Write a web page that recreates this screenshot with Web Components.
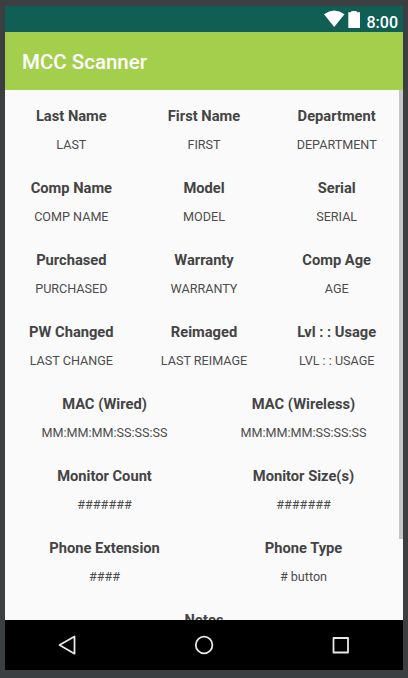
<!DOCTYPE html>
<html lang="en"><head><meta charset="utf-8"><title>MCC Scanner</title>
<style>html,body{margin:0;height:100%;overflow:hidden}</style></head>
<body><mcc-phone></mcc-phone>
<script>
class DataCell extends HTMLElement{
  connectedCallback(){
    this.attachShadow({mode:'open'}).innerHTML=`<style>
:host{display:block;flex:1 1 0;min-width:0;height:72px;box-sizing:border-box;padding-top:14px;text-align:center;white-space:nowrap;color:#444}
b{display:block;font-weight:700;font-size:14.7px;line-height:24px}
span{display:block;font-size:12.6px;line-height:16px;margin-top:9px;color:#4c4c4c}
</style><b>${this.getAttribute('label')}</b><span><slot></slot></span>`;
  }
}
customElements.define('data-cell',DataCell);
class DataRow extends HTMLElement{
  connectedCallback(){
    this.attachShadow({mode:'open'}).innerHTML=`<style>:host{display:flex}</style><slot></slot>`;
  }
}
customElements.define('data-row',DataRow);
class StatusBar extends HTMLElement{
  connectedCallback(){
    this.attachShadow({mode:'open'}).innerHTML=`<style>
:host{display:flex;height:26px;background:#115e54;color:#fff;justify-content:flex-end;box-sizing:border-box;padding-right:5px;font-size:16px;font-weight:500;line-height:33px}
svg{width:46px;height:26px;flex:none}
span{width:34px;text-align:right}
</style><svg viewBox="0 0 46 26" fill="#fff"><path d="M6 8.200Q16.200 1 26.500 8.200L16.200 21Z"/><path d="M30.300 6.200h3V5h5.400v1.200H42V22H30.300Z"/></svg><span>8:00</span>`;
  }
}
customElements.define('status-bar',StatusBar);
class AppBar extends HTMLElement{
  connectedCallback(){
    this.attachShadow({mode:'open'}).innerHTML=`<style>
:host{display:flex;align-items:center;box-sizing:border-box;height:58px;background:#a4cf4c;color:#fff;padding:2px 0 0 17px;font-size:20.5px;font-weight:500}
</style><slot></slot>`;
  }
}
customElements.define('app-bar',AppBar);
class NavBar extends HTMLElement{
  connectedCallback(){
    this.attachShadow({mode:'open'}).innerHTML=`<style>
:host{display:block;height:50px;background:#000}svg{display:block}
</style><svg width="398" height="50" fill="none" stroke="#e8e8e8" stroke-width="1.8" stroke-linejoin="round"><path d="M54.500 25L69.500 16.500V33.700Z"/><circle cx="199.100" cy="25" r="8.300"/><path d="M328.500 18h14.500v14.500h-14.500Z"/></svg>`;
  }
}
customElements.define('nav-bar',NavBar);
class MccPhone extends HTMLElement{
  connectedCallback(){
    const rows=[
[['Last Name','LAST'],['First Name','FIRST'],['Department','DEPARTMENT']],
[['Comp Name','COMP NAME'],['Model','MODEL'],['Serial','SERIAL']],
[['Purchased','PURCHASED'],['Warranty','WARRANTY'],['Comp Age','AGE']],
[['PW Changed','LAST CHANGE'],['Reimaged','LAST REIMAGE'],['Lvl : : Usage','LVL : : USAGE']],
[['MAC (Wired)','MM:MM:MM:SS:SS:SS'],['MAC (Wireless)','MM:MM:MM:SS:SS:SS']],
[['Monitor Count','#######'],['Monitor Size(s)','#######']],
[['Phone Extension','####'],['Phone Type','# button']],
[['Notes','']]];
    this.attachShadow({mode:'open'}).innerHTML=`<style>
:host{display:flex;flex-direction:column;width:408px;height:678px;box-sizing:border-box;padding:6px 5px 8px;background:#3c3f41;font-family:Roboto,sans-serif}
main{flex:1;min-height:0;overflow:hidden;background:#fafafa;display:flex}
section{flex:1;width:398px}
i{width:4px;height:449px;background:#c6c6c6;margin-left:-4px}
</style><status-bar></status-bar><app-bar>MCC Scanner</app-bar><main><section>${rows.map(r=>`<data-row>${r.map(([a,b])=>`<data-cell label="${a}">${b}</data-cell>`).join('')}</data-row>`).join('')}</section><i></i></main><nav-bar></nav-bar>`;
  }
}
customElements.define('mcc-phone',MccPhone);
</script></body></html>
